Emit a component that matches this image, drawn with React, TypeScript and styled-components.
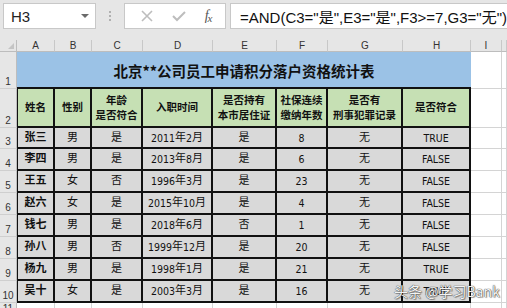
import React from "react";
import styled, { createGlobalStyle } from "styled-components";

const Global = createGlobalStyle`
  html, body { margin: 0; padding: 0; }
  body {
    width: 507px; height: 308px; overflow: hidden;
    background: #e6e6e6;
    font-family: "Noto Sans CJK SC", "Noto Sans", sans-serif;
  }
`;

const Page = styled.div`
  position: relative;
  width: 507px;
  height: 308px;
  overflow: hidden;
  display: flex;
  flex-direction: column;
  background: #e6e6e6;
`;

const Toolbar = styled.div`
  flex: 0 0 40px;
  height: 40px;
  display: flex;
  align-items: flex-start;
  padding-top: 3px;
  box-sizing: border-box;
`;

const NameBox = styled.div`
  margin-left: 3px;
  width: 100px;
  height: 26px;
  box-sizing: border-box;
  background: #fff;
  border: 1px solid #c8c8c8;
  display: flex;
  align-items: center;
  justify-content: space-between;
  padding: 0 6px 0 7px;
  font-family: "Liberation Sans", Arial, sans-serif;
  font-size: 15px;
  color: #222;
`;

const Caret = styled.span`
  width: 0; height: 0;
  border-left: 4px solid transparent;
  border-right: 4px solid transparent;
  border-top: 4px solid #6a6a6a;
`;

const Dots = styled.div`
  width: 31px;
  height: 26px;
  display: flex;
  flex-direction: column;
  align-items: center;
  justify-content: center;
  gap: 2px;
`;

const Dot = styled.span`
  width: 2px; height: 2px; background: #b0b0b0;
`;

const ButtonBox = styled.div`
  width: 110px;
  height: 26px;
  box-sizing: border-box;
  background: #fff;
  border: 1px solid #c8c8c8;
  display: flex;
  align-items: center;
  justify-content: space-around;
  padding: 0 4px 0 6px;
`;

const Fx = styled.span`
  font-family: "Liberation Serif", serif;
  font-style: italic;
  font-size: 14px;
  color: #555;
  letter-spacing: -1px;
`;

const FxSub = styled.span`
  font-size: 11px;
  position: relative;
  top: 2px;
`;

const FormulaBox = styled.div`
  margin-left: 4px;
  flex: 1;
  height: 26px;
  box-sizing: border-box;
  background: #fff;
  border: 1px solid #c8c8c8;
  border-right: none;
  display: flex;
  align-items: center;
  padding-left: 9px;
  font-family: "Liberation Sans", "Noto Sans CJK SC", sans-serif;
  font-size: 15px;
  color: #111;
  white-space: nowrap;
`;

const Sheet = styled.div`
  display: grid;
  grid-template-columns: 17px 38px 37px 51px 70px 64px 51px 75px 68px 31px 1fr;
  grid-template-rows: 12px 37px 39px 21px repeat(7, 22px) 1fr;
  flex: 1 1 auto;
  min-height: 0;
  background: #fff;
`;

const Corner = styled.div`
  background: #e6e6e6;
  border-right: 1px solid #bdbdbd;
  border-bottom: 1px solid #bdbdbd;
  position: relative;
  &::after {
    content: "";
    position: absolute;
    right: 2px; bottom: 2px;
    border-left: 6px solid transparent;
    border-bottom: 6px solid #c4c4c4;
  }
`;

const ColHead = styled.div`
  background: #e6e6e6;
  border-right: 1px solid #c8c8c8;
  border-bottom: 1px solid #bdbdbd;
  font-family: "Liberation Sans", Arial, sans-serif;
  font-size: 10px;
  line-height: 11px;
  color: #333;
  text-align: center;
`;

const RowHead = styled.div`
  background: #e6e6e6;
  border-right: 1px solid #bdbdbd;
  border-bottom: 1px solid #cfcfcf;
  font-family: "Liberation Sans", Arial, sans-serif;
  font-size: 10px;
  color: #333;
  display: flex;
  align-items: flex-end;
  justify-content: center;
  padding-bottom: 1px;
  box-sizing: border-box;
`;

const Title = styled.div`
  grid-column: 2 / span 8;
  background: #9bc2e6;
  border-bottom: 2px solid #111;
  display: flex;
  align-items: center;
  justify-content: center;
  font-weight: bold;
  font-size: 14.5px;
  color: #111;
  padding-top: 2px;
  box-sizing: border-box;
`;

const Cell = styled.div<{ $fill: string; $bold?: boolean; $first?: boolean; $head?: boolean }>`
  background: ${(p) => p.$fill};
  border-right: 2px solid #111;
  border-bottom: 2px solid #111;
  border-left: ${(p) => (p.$first ? "1px solid #111" : "none")};
  box-sizing: border-box;
  display: flex;
  align-items: center;
  justify-content: center;
  text-align: center;
  font-family: "DejaVu Sans Condensed", "Noto Sans CJK SC", sans-serif;
  font-size: ${(p) => (p.$head ? "10.5px" : "11px")};
  line-height: ${(p) => (p.$head ? "15px" : "16px")};
  font-weight: ${(p) => (p.$bold ? "bold" : "normal")};
  color: #111;
  white-space: pre;
  overflow: hidden;
`;

const Latin = styled.span`
  font-size: 10.5px;
`;

const Blank = styled.div`
  background: #fff;
  border-right: 1px solid #d4d4d4;
  border-bottom: 1px solid #d4d4d4;
`;

const Watermark = styled.div`
  position: absolute;
  left: 394px;
  top: 282px;
  font-family: "Noto Sans CJK SC", "Noto Sans", sans-serif;
  font-size: 14px;
  line-height: 18px;
  white-space: nowrap;
  color: rgba(255, 255, 255, 0.95);
  text-shadow: 0 0 1px #444, 0 0 1px #444, 1px 1px 1px rgba(0, 0, 0, 0.35);
`;

const cols = ["A", "B", "C", "D", "E", "F", "G", "H", "I", ""];

const headers = [
  "姓名",
  "性别",
  "年龄\n是否符合",
  "入职时间",
  "是否持有\n本市居住证",
  "社保连续\n缴纳年数",
  "是否有\n刑事犯罪记录",
  "是否符合",
];

const rows: string[][] = [
  ["张三", "男", "是", "2011年2月", "是", "8", "无", "TRUE"],
  ["李四", "男", "是", "2013年8月", "是", "6", "无", "FALSE"],
  ["王五", "女", "否", "1996年3月", "是", "23", "无", "FALSE"],
  ["赵六", "女", "是", "2015年10月", "是", "4", "无", "FALSE"],
  ["钱七", "男", "是", "2018年6月", "否", "1", "无", "FALSE"],
  ["孙八", "男", "否", "1999年12月", "是", "20", "无", "FALSE"],
  ["杨九", "男", "是", "1998年1月", "是", "21", "无", "TRUE"],
  ["吴十", "女", "是", "2003年3月", "是", "16", "无", "TRUE"],
];

const renderValue = (s: string) =>
  s.split(/([A-Za-z0-9]+)/).map((part, i) =>
    /^[A-Za-z0-9]+$/.test(part) ? <Latin key={i}>{part}</Latin> : part
  );

export default function App() {
  return (
    <Page>
      <Global />
      <Toolbar>
        <NameBox>
          H3
          <Caret />
        </NameBox>
        <Dots>
          <Dot />
          <Dot />
          <Dot />
        </Dots>
        <ButtonBox>
          <svg width="12" height="12" viewBox="0 0 12 12">
            <path d="M1 1 L11 11 M11 1 L1 11" stroke="#bdbdbd" strokeWidth="1.6" fill="none" />
          </svg>
          <svg width="14" height="12" viewBox="0 0 14 12">
            <path d="M1 6 L5 10 L13 2" stroke="#bdbdbd" strokeWidth="2" fill="none" />
          </svg>
          <Fx>
            f<FxSub>x</FxSub>
          </Fx>
        </ButtonBox>
        <FormulaBox>=AND(C3="是",E3="是",F3&gt;=7,G3="无")</FormulaBox>
      </Toolbar>
      <Sheet>
        <Corner />
        {cols.map((c, i) => (
          <ColHead key={i}>{c}</ColHead>
        ))}

        <RowHead>1</RowHead>
        <Title>北京**公司员工申请积分落户资格统计表</Title>
        <Blank />
        <Blank />

        <RowHead>2</RowHead>
        {headers.map((h, i) => (
          <Cell key={i} $fill="#c6e0b4" $bold $head $first={i === 0}>
            {h}
          </Cell>
        ))}
        <Blank />
        <Blank />

        {rows.map((r, ri) => (
          <React.Fragment key={ri}>
            <RowHead>{ri + 3}</RowHead>
            {r.map((v, ci) => (
              <Cell key={ci} $fill="#d9d9d9" $bold={ci === 0} $first={ci === 0}>
                {renderValue(v)}
              </Cell>
            ))}
            <Blank />
            <Blank />
          </React.Fragment>
        ))}

        <RowHead>11</RowHead>
        {cols.map((_, i) => (
          <Blank key={i} />
        ))}
      </Sheet>
      <Watermark>头条 @学习Bank</Watermark>
    </Page>
  );
}
